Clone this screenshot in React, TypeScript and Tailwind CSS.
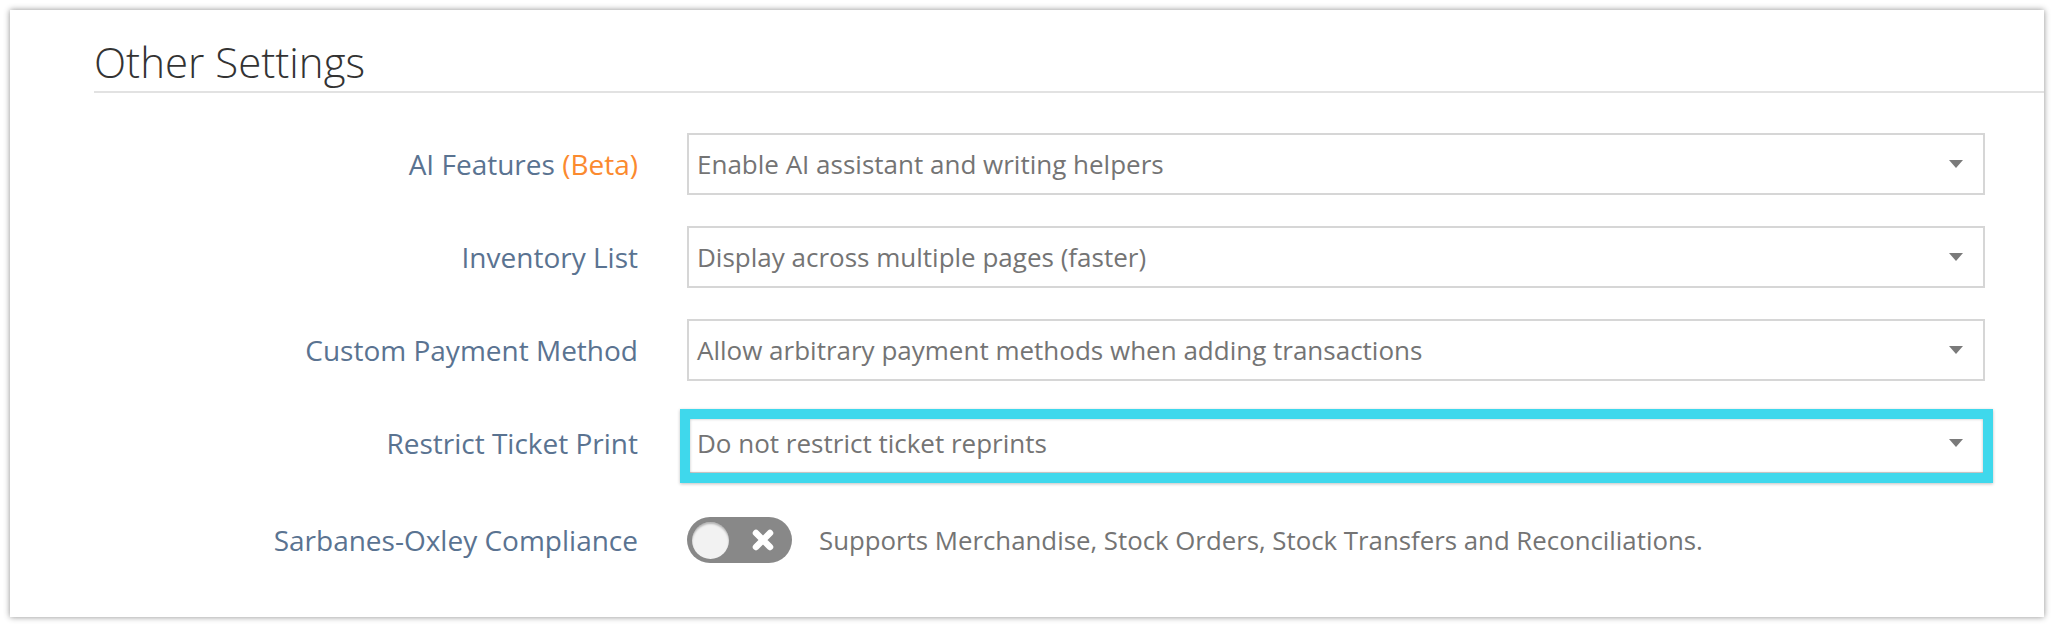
import React from 'react';

const rows = [
  { label: 'AI Features', beta: true, value: 'Enable AI assistant and writing helpers' },
  { label: 'Inventory List', value: 'Display across multiple pages (faster)' },
  { label: 'Custom Payment Method', value: 'Allow arbitrary payment methods when adding transactions' },
  { label: 'Restrict Ticket Print', value: 'Do not restrict ticket reprints', highlight: true },
];

function SelectBox({ value, highlight }: { value: string; highlight?: boolean }) {
  return (
    <div className="relative flex-1">
      <div className="flex h-[62px] items-center justify-between border-2 border-[#d6d6d6] bg-white pl-[8px] pr-[20px]">
        <span className="text-[26px] text-[#747474]">{value}</span>
        <svg width="14" height="8" viewBox="0 0 14 8" className="shrink-0">
          <path d="M0 0 H14 L7 8 Z" fill="#7a7a7a" />
        </svg>
      </div>
      {highlight && (
        <div className="pointer-events-none absolute -left-[7px] -top-[3px] -right-[8px] -bottom-[9px] border-[10px] border-[#3fd8ec] shadow-[0_1px_3px_rgba(0,0,0,0.25),inset_0_0_3px_rgba(0,0,0,0.25)]" />
      )}
    </div>
  );
}

function Toggle() {
  return (
    <div className="flex h-[46px] w-[105px] items-center justify-between rounded-full bg-[#888888] pl-[5px] pr-[17px]">
      <div className="h-[37px] w-[37px] rounded-full bg-[#f2f2f2] shadow-[inset_0_2px_2px_rgba(0,0,0,0.25)]" />
      <svg width="24" height="24" viewBox="0 0 24 24">
        <path d="M5 5 L19 19 M19 5 L5 19" stroke="#ffffff" strokeWidth="6.5" strokeLinecap="round" />
      </svg>
    </div>
  );
}

export default function App() {
  return (
    <div className="h-[628px] w-full bg-white p-[10px]" style={{ fontFamily: '"Open Sans", "Liberation Sans", sans-serif' }}>
      <div className="h-[607px] bg-white pl-[84px] pt-[23px] shadow-[0_0_6px_rgba(0,0,0,0.45)]">
        <h2 className="border-b-2 border-[#e2e2e2] pb-[1px] text-[42px] font-light leading-[57px] text-[#333333]">Other Settings</h2>

        <div className="mt-[40px] flex flex-col gap-[31px] pr-[59px]">
          {rows.map(r => (
            <div key={r.label} className="flex items-center gap-[49px]">
              <div className="w-[544px] shrink-0 text-right text-[28px] text-[#5a7391]">
                {r.label}
                {r.beta && <span className="text-[#fb8a2f]"> (Beta)</span>}
              </div>
              <SelectBox value={r.value} highlight={r.highlight} />
            </div>
          ))}

          <div className="mt-[4px] flex h-[62px] items-center gap-[49px]">
            <div className="w-[544px] shrink-0 text-right text-[28px] text-[#5a7391]">Sarbanes-Oxley Compliance</div>
            <div className="flex items-center gap-[27px]">
              <Toggle />
              <span className="text-[25.8px] text-[#747474]">Supports Merchandise, Stock Orders, Stock Transfers and Reconciliations.</span>
            </div>
          </div>
        </div>
      </div>
    </div>
  );
}
